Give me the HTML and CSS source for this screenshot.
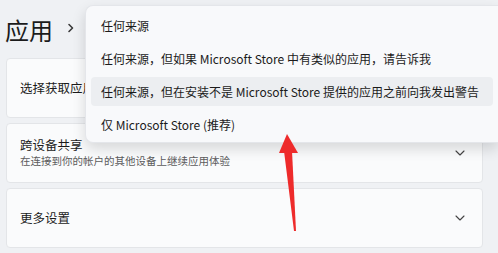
FILE: index.html
```html
<!DOCTYPE html>
<html lang="zh-CN">
<head>
    <meta charset="UTF-8">
    <title>应用</title>
    <link rel="stylesheet" href="styles.css">
</head>
<body>
    <div class="page">
        <div class="header">
            <h1>应用</h1>
            <svg class="crumb" width="8" height="10" viewBox="0 0 8 10">
                <path d="M2 1.5 L5.5 5 L2 8.5" fill="none" stroke="#3a3a3a" stroke-width="1.6" stroke-linecap="round" stroke-linejoin="round"/>
            </svg>
        </div>
        <div class="cards">
            <div class="card">
                <div class="card-text">
                    <div class="card-title">选择获取应用的位置</div>
                </div>
            </div>
            <div class="card">
                <div class="card-text">
                    <div class="card-title">跨设备共享</div>
                    <div class="card-sub">在连接到你的帐户的其他设备上继续应用体验</div>
                </div>
                <svg class="expand" width="10" height="6" viewBox="0 0 10 6">
                    <path d="M1 1 L5 5 L9 1" fill="none" stroke="#444" stroke-width="1.1" stroke-linecap="round" stroke-linejoin="round"/>
                </svg>
            </div>
            <div class="card">
                <div class="card-text">
                    <div class="card-title">更多设置</div>
                </div>
                <svg class="expand" width="10" height="6" viewBox="0 0 10 6">
                    <path d="M1 1 L5 5 L9 1" fill="none" stroke="#444" stroke-width="1.1" stroke-linecap="round" stroke-linejoin="round"/>
                </svg>
            </div>
        </div>
    </div>

    <ul class="menu">
        <li>任何来源</li>
        <li>任何来源，但如果 Microsoft Store 中有类似的应用，请告诉我</li>
        <li class="active">任何来源，但在安装不是 Microsoft Store 提供的应用之前向我发出警告</li>
        <li>仅 Microsoft Store (推荐)</li>
    </ul>

    <svg class="arrow" width="498" height="253" viewBox="0 0 498 253">
        <polygon points="287,134 298,153 279,153" fill="#ee2b2b"/>
        <polygon points="284,151 292,151 296,231 294,231" fill="#ee2b2b"/>
    </svg>
</body>
</html>
```

FILE: styles.css
```css
body {
    margin: 0;
    padding: 0;
    background-color: #eff1f4;
    font-family: "Noto Sans CJK SC", "Noto Sans", sans-serif;
    color: #1b1b1b;
    width: 498px;
    height: 253px;
    overflow: hidden;
    position: relative;
}

.page {
    padding-left: 6px;
    width: 477px;
}

.header {
    height: 58px;
    display: flex;
    align-items: center;
    gap: 14px;
    padding-top: 2px;
    box-sizing: border-box;
}

.header h1 {
    margin: 0 0 0 -1px;
    font-size: 24px;
    font-weight: 400;
    line-height: 30px;
}

.crumb {
    margin-top: -4px;
}

.cards {
    display: flex;
    flex-direction: column;
    gap: 5px;
}

.card {
    height: 60px;
    box-sizing: border-box;
    background-color: #fafbfc;
    border: 1px solid #e3e5e8;
    border-radius: 4px;
    display: flex;
    align-items: center;
    padding: 0 17px 0 13px;
}

.card-text {
    flex: 1;
}

.card-title {
    font-size: 12.5px;
    line-height: 16px;
}

.card-sub {
    font-size: 10.5px;
    line-height: 16px;
    color: #5c5c5c;
}

.menu {
    position: absolute;
    left: 85px;
    right: 0;
    top: 5px;
    margin: 0;
    padding: 5px 0;
    list-style: none;
    background-color: #f8f9fb;
    border: 1px solid #e4e6ea;
    border-right: none;
    border-radius: 8px 0 0 8px;
    box-shadow: 0 6px 14px rgba(0, 0, 0, 0.14);
    display: flex;
    flex-direction: column;
    gap: 4px;
    box-sizing: border-box;
    height: 138px;
}

.menu li {
    height: 29px;
    margin: 0 5px;
    padding-left: 10px;
    border-radius: 4px;
    font-size: 12px;
    line-height: 29px;
    white-space: nowrap;
}

.menu li.active {
    background-color: #eceef1;
}

.arrow {
    position: absolute;
    left: 0;
    top: 0;
}
```
